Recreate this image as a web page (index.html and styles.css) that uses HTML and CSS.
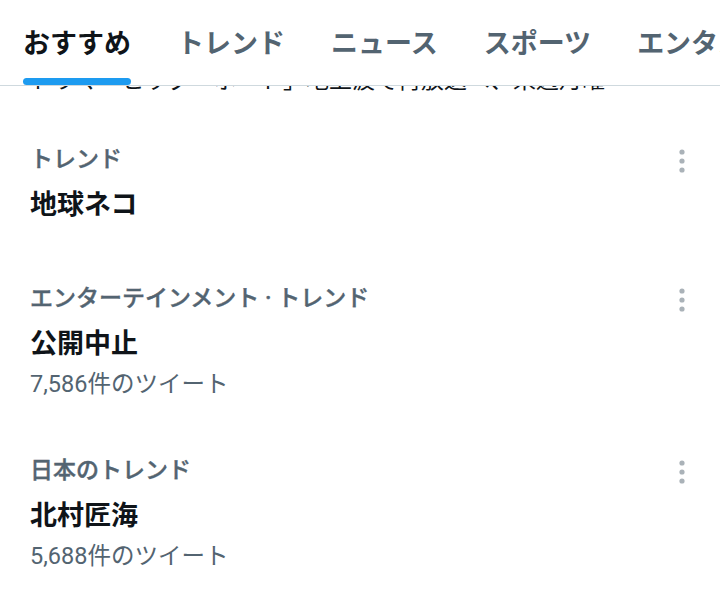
FILE: index.html
```html
<!DOCTYPE html>
<html lang="ja">
<head>
  <meta charset="UTF-8">
  <meta name="viewport" content="width=device-width, initial-scale=1.0">
  <title>話題を検索</title>
  <link rel="stylesheet" href="styles.css">
</head>
<body>

<!-- タブ -->
<div class="tab-bar">
  <div class="tab active"><span class="tab-label">おすすめ</span><span class="tab-indicator"></span></div>
  <div class="tab"><span class="tab-label">トレンド</span><span class="tab-indicator"></span></div>
  <div class="tab"><span class="tab-label">ニュース</span><span class="tab-indicator"></span></div>
  <div class="tab"><span class="tab-label">スポーツ</span><span class="tab-indicator"></span></div>
  <div class="tab"><span class="tab-label">エンタメ</span><span class="tab-indicator"></span></div>
</div>

<!-- 上にスクロールされた行 -->
<div class="peek">
  <div class="peek-text">ドラマ「ビッグ・ボード」地上波で再放送へ、来週月曜</div>
</div>

<!-- トレンド一覧 -->
<div class="trend-list">
  <div class="trend">
    <div class="trend-body">
      <div class="trend-category">トレンド</div>
      <div class="trend-title">地球ネコ</div>
    </div>
    <svg class="trend-more" viewBox="0 0 20 32" width="20" height="32"><circle cx="10" cy="8" r="2.6"/><circle cx="10" cy="17" r="2.6"/><circle cx="10" cy="26" r="2.6"/></svg>
  </div>

  <div class="trend">
    <div class="trend-body">
      <div class="trend-category">エンターテインメント · トレンド</div>
      <div class="trend-title">公開中止</div>
      <div class="trend-count">7,586件のツイート</div>
    </div>
    <svg class="trend-more" viewBox="0 0 20 32" width="20" height="32"><circle cx="10" cy="8" r="2.6"/><circle cx="10" cy="17" r="2.6"/><circle cx="10" cy="26" r="2.6"/></svg>
  </div>

  <div class="trend">
    <div class="trend-body">
      <div class="trend-category">日本のトレンド</div>
      <div class="trend-title">北村匠海</div>
      <div class="trend-count">5,688件のツイート</div>
    </div>
    <svg class="trend-more" viewBox="0 0 20 32" width="20" height="32"><circle cx="10" cy="8" r="2.6"/><circle cx="10" cy="17" r="2.6"/><circle cx="10" cy="26" r="2.6"/></svg>
  </div>
</div>

</body>
</html>
```

FILE: styles.css
```css
/* 基本 */
body {
  margin: 0;
  background: #fff;
  color: #0f1419;
  font-family: Roboto, "Noto Sans CJK JP", sans-serif;
  overflow: hidden;
}

/* タブ */
.tab-bar {
  display: flex;
  height: 85px;
  border-bottom: 1px solid #cfd9de;
  overflow: hidden;
  white-space: nowrap;
}

.tab {
  display: flex;
  flex-direction: column;
  align-items: stretch;
  flex-shrink: 0;
  padding: 26px 23px 0 23px;
  color: #536471;
}

.tab-label {
  font-size: 27px;
  font-weight: 700;
  line-height: 36px;
}

.tab-indicator {
  height: 7px;
  margin-top: 16px;
  border-radius: 4px;
}

.tab.active {
  color: #0f1419;
}

.tab.active .tab-indicator {
  background: #1d9bf0;
}

/* スクロールで隠れた行 */
.peek {
  height: 11px;
  overflow: hidden;
  display: flex;
  align-items: flex-end;
  padding-left: 30px;
  margin-bottom: 20px;
}

.peek-text {
  font-size: 23px;
  line-height: 32px;
  white-space: nowrap;
  flex-shrink: 0;
}

/* トレンド */
.trend {
  display: flex;
  align-items: flex-start;
  padding: 27px 28px 28px 30px;
}

.trend-body {
  flex: 1;
}

.trend-category {
  font-size: 23px;
  font-weight: 500;
  line-height: 32px;
  color: #536471;
  -webkit-text-stroke: 0.4px #536471;
}

.trend-title {
  font-size: 27px;
  font-weight: 700;
  line-height: 46px;
  margin-top: 6px;
}

.trend-count {
  font-size: 23.5px;
  line-height: 32px;
  margin-top: 1px;
  color: #536471;
}

.trend-more {
  fill: #aab2b8;
  flex-shrink: 0;
}
```
